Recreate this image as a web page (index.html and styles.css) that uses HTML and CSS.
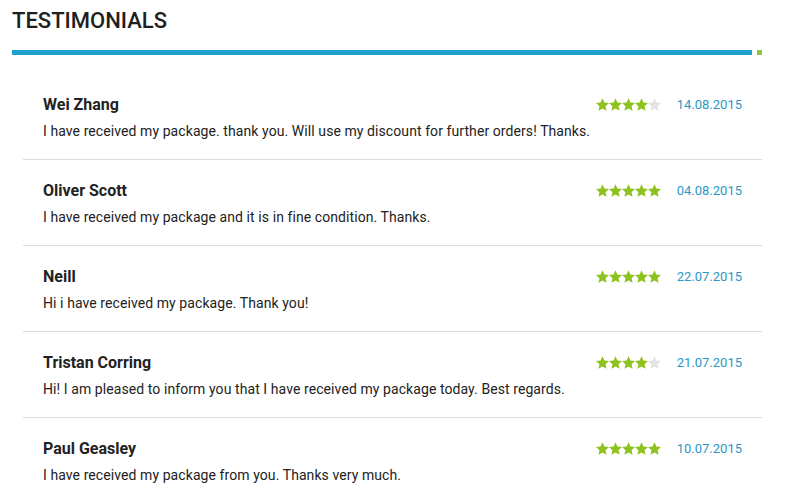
FILE: index.html
```html
<!DOCTYPE html>
<html lang="en">
<head>
    <meta charset="UTF-8">
    <title>Testimonials</title>
    <link rel="stylesheet" href="styles.css">
</head>
<body>
    <svg width="0" height="0" class="defs">
        <defs>
            <polygon id="star" points="6.5,0.3 8.38,4.61 13,5.07 9.54,8.19 10.56,12.78 6.5,10.4 2.44,12.78 3.46,8.19 0,5.07 4.62,4.61"/>
        </defs>
    </svg>

    <div class="section">
        <h1 class="title">TESTIMONIALS</h1>
        <div class="title-bar">
            <span class="bar-line"></span>
            <span class="bar-dot"></span>
        </div>

        <ul class="reviews">
            <li class="review">
                <div class="review-head">
                    <span class="name">Wei Zhang</span>
                    <span class="meta">
                        <span class="stars">
                            <svg><use href="#star" class="on"/></svg><svg><use href="#star" class="on"/></svg><svg><use href="#star" class="on"/></svg><svg><use href="#star" class="on"/></svg><svg><use href="#star" class="off"/></svg>
                        </span>
                        <span class="date">14.08.2015</span>
                    </span>
                </div>
                <p class="text">I have received my package. thank you. Will use my discount for further orders! Thanks.</p>
            </li>
            <li class="review">
                <div class="review-head">
                    <span class="name">Oliver Scott</span>
                    <span class="meta">
                        <span class="stars">
                            <svg><use href="#star" class="on"/></svg><svg><use href="#star" class="on"/></svg><svg><use href="#star" class="on"/></svg><svg><use href="#star" class="on"/></svg><svg><use href="#star" class="on"/></svg>
                        </span>
                        <span class="date">04.08.2015</span>
                    </span>
                </div>
                <p class="text">I have received my package and it is in fine condition. Thanks.</p>
            </li>
            <li class="review">
                <div class="review-head">
                    <span class="name">Neill</span>
                    <span class="meta">
                        <span class="stars">
                            <svg><use href="#star" class="on"/></svg><svg><use href="#star" class="on"/></svg><svg><use href="#star" class="on"/></svg><svg><use href="#star" class="on"/></svg><svg><use href="#star" class="on"/></svg>
                        </span>
                        <span class="date">22.07.2015</span>
                    </span>
                </div>
                <p class="text">Hi i have received my package. Thank you!</p>
            </li>
            <li class="review">
                <div class="review-head">
                    <span class="name">Tristan Corring</span>
                    <span class="meta">
                        <span class="stars">
                            <svg><use href="#star" class="on"/></svg><svg><use href="#star" class="on"/></svg><svg><use href="#star" class="on"/></svg><svg><use href="#star" class="on"/></svg><svg><use href="#star" class="off"/></svg>
                        </span>
                        <span class="date">21.07.2015</span>
                    </span>
                </div>
                <p class="text">Hi! I am pleased to inform you that I have received my package today. Best regards.</p>
            </li>
            <li class="review">
                <div class="review-head">
                    <span class="name">Paul Geasley</span>
                    <span class="meta">
                        <span class="stars">
                            <svg><use href="#star" class="on"/></svg><svg><use href="#star" class="on"/></svg><svg><use href="#star" class="on"/></svg><svg><use href="#star" class="on"/></svg><svg><use href="#star" class="on"/></svg>
                        </span>
                        <span class="date">10.07.2015</span>
                    </span>
                </div>
                <p class="text">I have received my package from you. Thanks very much.</p>
            </li>
        </ul>
    </div>
</body>
</html>
```

FILE: styles.css
```css
body {
    margin: 0;
    font-family: Roboto, "Liberation Sans", Arial, sans-serif;
    background: #fff;
    color: #222;
}
.defs {
    position: absolute;
}
.section {
    padding: 7px 23px 0 12px;
}
.title {
    margin: 0;
    font-size: 22px;
    font-weight: 500;
    line-height: 28px;
    color: #1f1f1f;
}
.title-bar {
    display: flex;
    align-items: center;
    gap: 5px;
    margin-top: 15px;
}
.bar-line {
    flex: 1;
    height: 5px;
    background: #1ba1cc;
}
.bar-dot {
    width: 5px;
    height: 5px;
    background: #8cc63f;
}
.reviews {
    list-style: none;
    margin: 19px 0 0 11px;
    padding: 0;
}
.review {
    padding: 20px 20px 18px 20px;
    border-bottom: 1px solid #dcdcdc;
}
.review-head {
    display: flex;
    justify-content: space-between;
    align-items: center;
    height: 20px;
}
.name {
    font-size: 16px;
    font-weight: 700;
    color: #222;
}
.meta {
    display: flex;
    align-items: center;
    gap: 16px;
}
.stars {
    display: flex;
}
.stars svg {
    width: 13px;
    height: 13px;
    overflow: visible;
}
.on {
    fill: #8dc21f;
}
.off {
    fill: #e3e3e3;
}
.date {
    font-size: 13px;
    color: #2b97c3;
}
.text {
    margin: 7px 0 0;
    font-size: 14px;
    line-height: 20px;
    letter-spacing: 0.08px;
    color: #222;
}
```
